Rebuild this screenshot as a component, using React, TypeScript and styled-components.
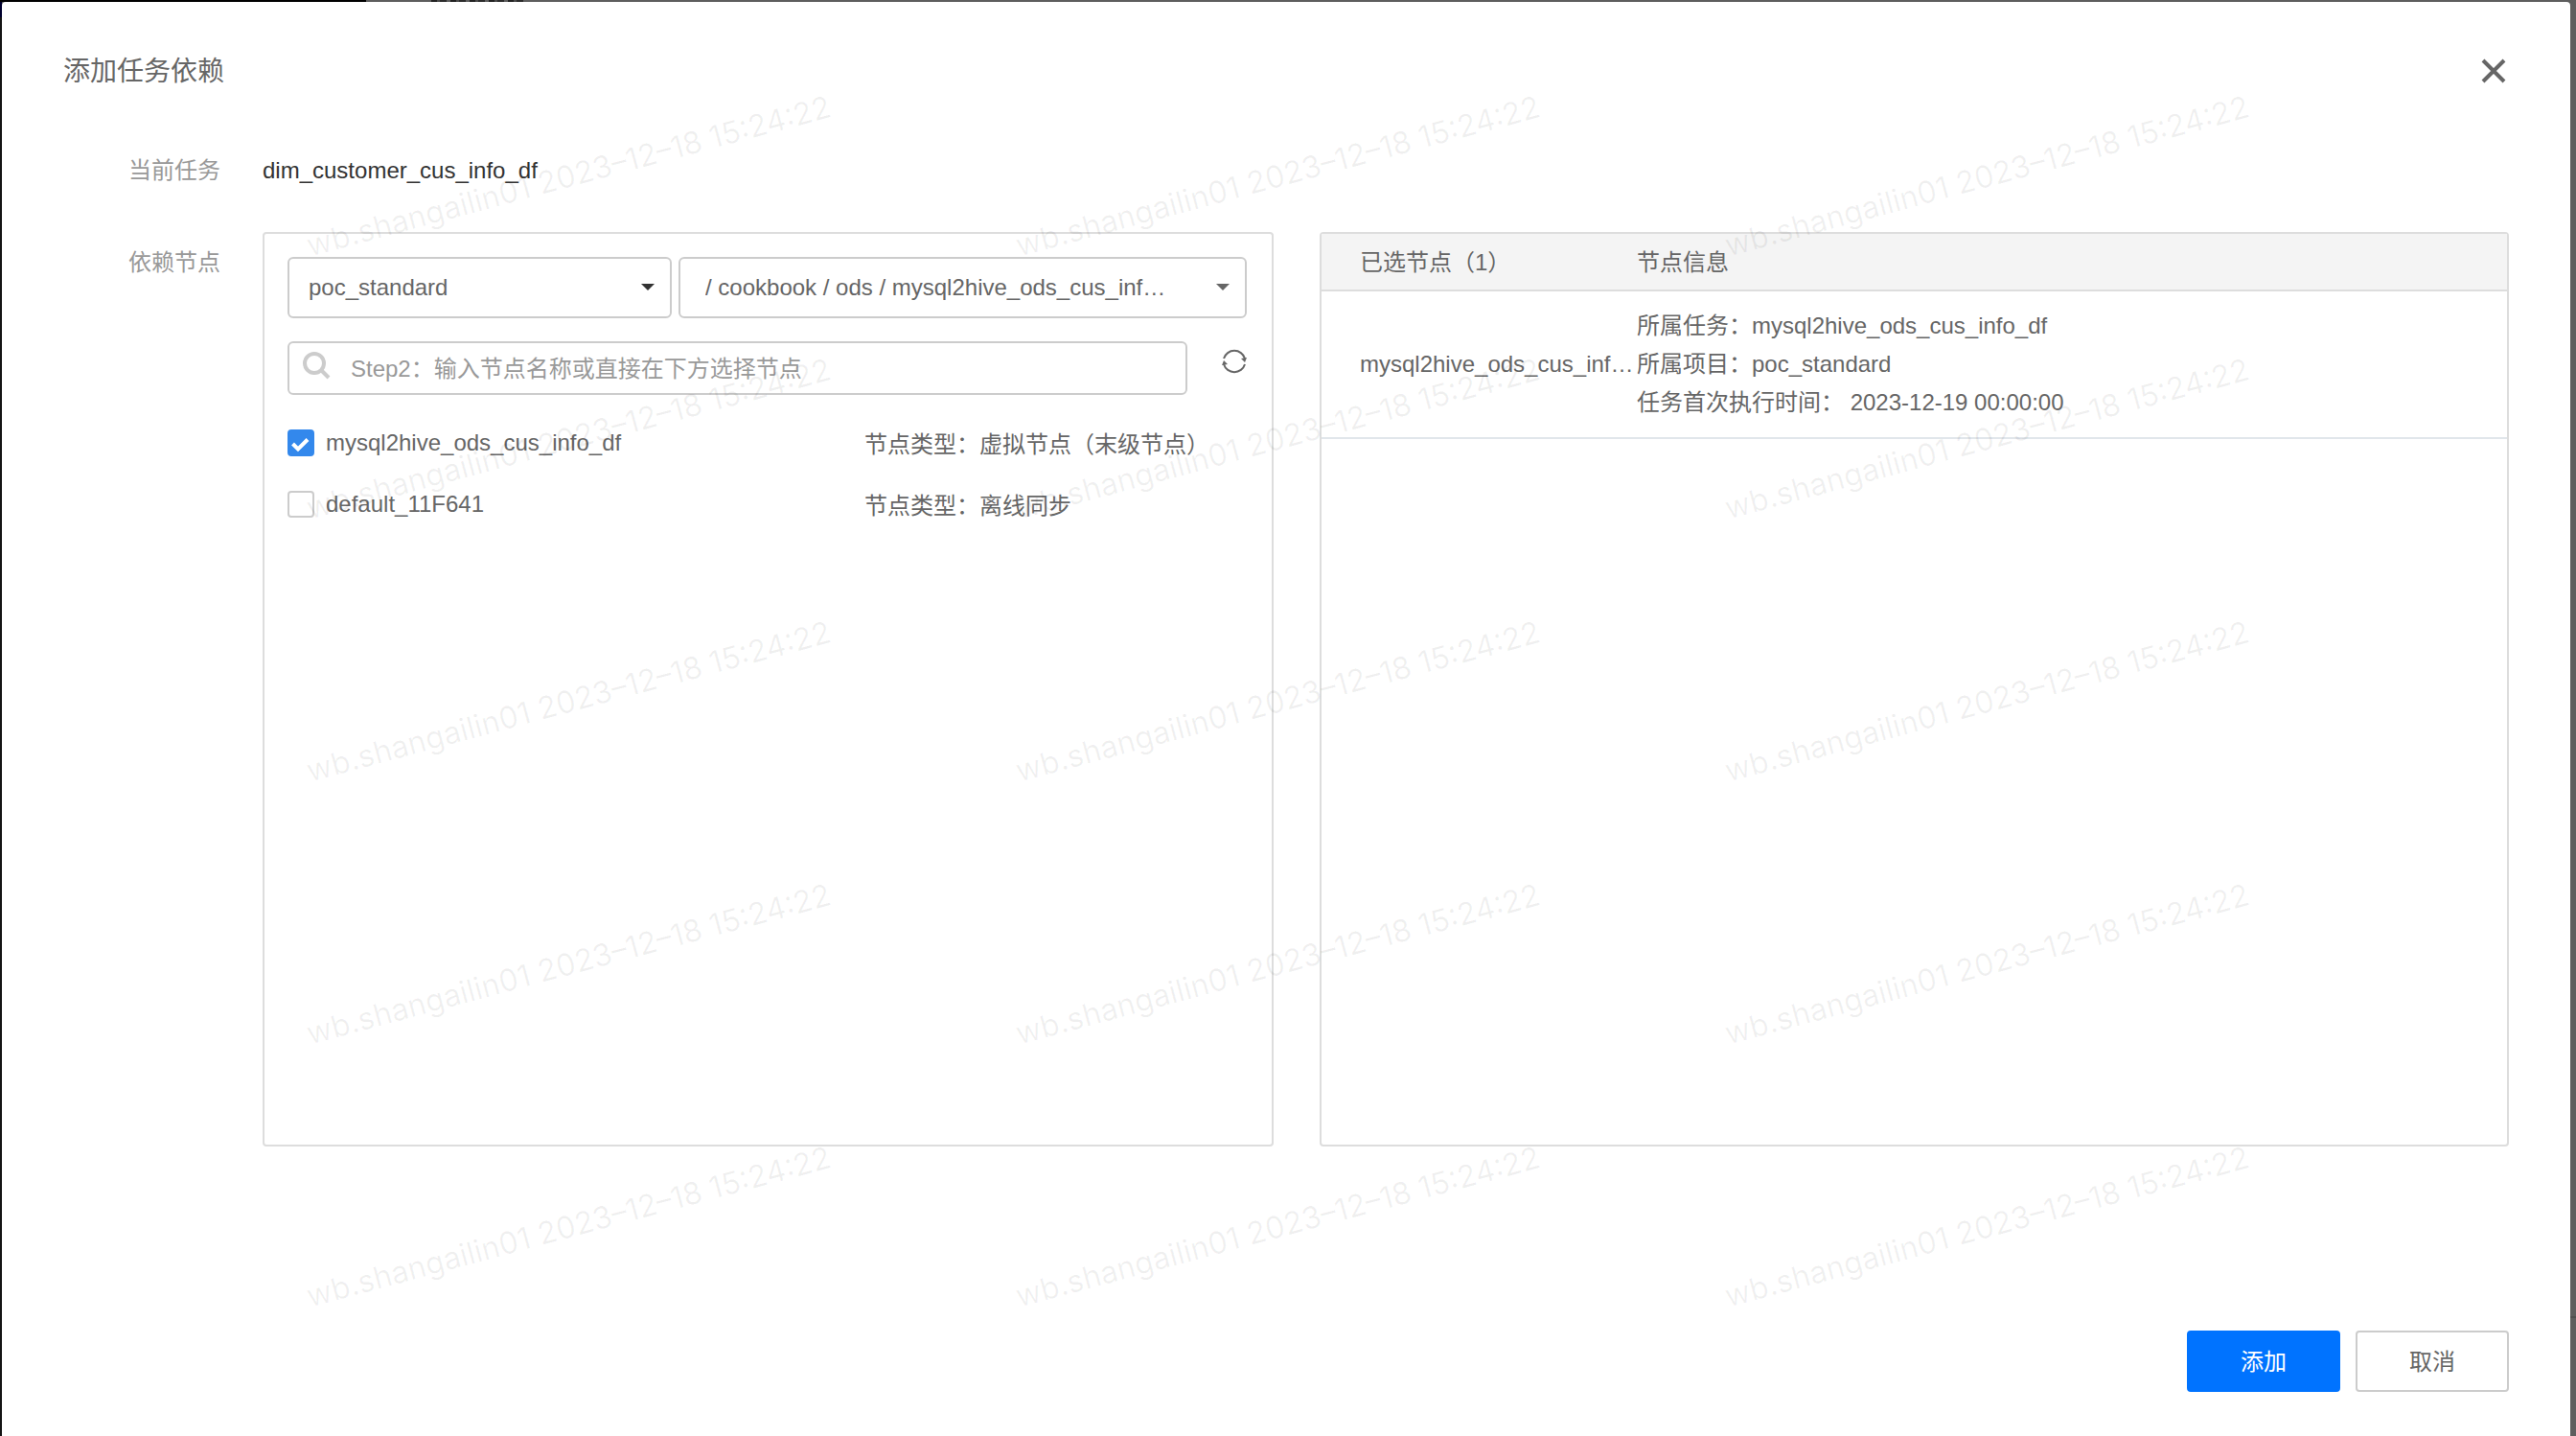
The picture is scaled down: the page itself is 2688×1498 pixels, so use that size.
import React, { useState } from "react";
import styled, { createGlobalStyle } from "styled-components";

const sans = `"Liberation Sans", "Noto Sans CJK SC", sans-serif`;

const GlobalStyle = createGlobalStyle`
  *, *::before, *::after { box-sizing: border-box; }
  body {
    margin: 0;
    background: #5e5e5e;
    color: #666;
    font-family: ${sans};
    font-size: 24px;
    line-height: 40px;
  }
  button, input, select { font: inherit; color: inherit; }
`;

const Backdrop = styled.div`
  min-height: 100vh;
  display: flex;
  padding: 2px 6px 0 2px;
  background:
    linear-gradient(#000, #000) 0 0 / 382px 2px no-repeat,
    repeating-linear-gradient(90deg, #222 0 6px, #4a4a4a 6px 9px, #2c2c2c 9px 16px, #5e5e5e 16px 20px) 450px 0 / 100px 2px no-repeat,
    linear-gradient(#00002e, #00002e) 0 0 / 2px 18px no-repeat,
    linear-gradient(#141414, #141414) 0 0 / 2px 100% no-repeat,
    linear-gradient(#505050, #505050) 100% 1373px / 6px 2px no-repeat,
    #5e5e5e;
`;

const Dialog = styled.section`
  position: relative;
  flex: 1;
  min-width: 0;
  display: flex;
  flex-direction: column;
  padding: 50px 64px 46px;
  background: #fff;
  border-radius: 4px 4px 0 0;
  overflow: hidden;
`;

const Header = styled.header`
  display: flex;
  align-items: center;
  justify-content: space-between;
`;

const Title = styled.h1`
  margin: 0;
  padding-top: 2px;
  font-size: 28px;
  line-height: 42px;
  font-weight: 400;
`;

const CloseButton = styled.button`
  display: flex;
  padding: 0;
  margin-right: 2px;
  border: 0;
  background: none;
  cursor: pointer;
`;

const Form = styled.div`
  flex: 1;
  display: grid;
  grid-template-columns: 164px minmax(0, 1fr);
  grid-template-rows: auto 1fr;
  gap: 44px;
  padding: 62px 0 192px;
`;

const FieldLabel = styled.span<{ $top?: number }>`
  padding-top: ${(p) => p.$top ?? 0}px;
  text-align: right;
  color: #999;
`;

const CurrentTask = styled.span`
  color: #333;
`;

const Panels = styled.div`
  display: grid;
  grid-template-columns: minmax(0, 1055fr) minmax(0, 1241fr);
  gap: 48px;
`;

const Panel = styled.div`
  border: 2px solid #ddd;
  border-radius: 4px;
  min-width: 0;
`;

const SourcePanel = styled(Panel)`
  padding: 24px 26px 24px 24px;
`;

const SelectRow = styled.div`
  display: grid;
  grid-template-columns: minmax(0, 401fr) minmax(0, 593fr);
  gap: 7px;
`;

const SelectBox = styled.div`
  position: relative;
`;

const Select = styled.select<{ $indent?: boolean }>`
  display: block;
  appearance: none;
  width: 100%;
  height: 64px;
  padding: 0 ${(p) => (p.$indent ? 48 : 40)}px 0 ${(p) => (p.$indent ? 26 : 20)}px;
  border: 2px solid #ccc;
  border-radius: 6px;
  background: #fff;
`;

const Caret = styled.span<{ $color: string }>`
  position: absolute;
  right: 18px;
  top: 28px;
  border: 7px solid transparent;
  border-top-color: ${(p) => p.$color};
  border-bottom: 0;
  pointer-events: none;
`;

const SearchRow = styled.div`
  display: flex;
  align-items: flex-start;
  gap: 36px;
  margin-top: 24px;
`;

const SearchBox = styled.label`
  display: flex;
  flex: 1;
  height: 56px;
  padding: 8px 14px;
  border: 2px solid #ccc;
  border-radius: 6px;
  gap: 20px;
`;

const SearchInput = styled.input`
  flex: 1;
  min-width: 0;
  height: 38px;
  padding: 0;
  border: 0;
  outline: 0;
  background: none;
  &::placeholder { color: #999; opacity: 1; }
`;

const RefreshButton = styled.button`
  display: flex;
  padding: 8px 0;
  border: 0;
  background: none;
  cursor: pointer;
`;

const NodeList = styled.ul`
  list-style: none;
  margin: 30px 0 0;
  padding: 0;
  display: grid;
  gap: 22px;
`;

const NodeItem = styled.li`
  display: grid;
  grid-template-columns: minmax(0, 602fr) minmax(0, 399fr);
`;

const NodeLabel = styled.label`
  display: flex;
  align-items: center;
  height: 40px;
  gap: 12px;
`;

const NodeType = styled.span`
  padding-top: 2px;
`;

const tick = encodeURIComponent(
  `<svg xmlns="http://www.w3.org/2000/svg" viewBox="0 0 28 28"><path d="M5.500 15l5.500 5.500L21 10.500" fill="none" stroke="#fff" stroke-width="4"/></svg>`
);

const Checkbox = styled.input`
  appearance: none;
  flex: none;
  width: 28px;
  height: 28px;
  margin: 0;
  border: 2px solid #ccc;
  border-radius: 4px;
  background: #fff;
  &:checked {
    border-color: #3388ec;
    background: #3388ec url("data:image/svg+xml,${tick}") center / 28px 28px no-repeat;
  }
`;

const Table = styled.table`
  width: 100%;
  border-collapse: separate;
  border-spacing: 0;
  table-layout: fixed;
  text-align: left;
`;

const HeadCell = styled.th<{ $first?: boolean }>`
  height: 60px;
  width: ${(p) => (p.$first ? "329px" : "auto")};
  padding: 2px 0 0 ${(p) => (p.$first ? 40 : 0)}px;
  font-weight: 400;
  background: #f4f4f4;
  border-bottom: 2px solid #ddd;
`;

const Cell = styled.td<{ $first?: boolean }>`
  padding: 16px 0 16px ${(p) => (p.$first ? 40 : 0)}px;
  border-bottom: 2px solid #e1e6eb;
  white-space: nowrap;
`;

const Footer = styled.footer`
  display: flex;
  justify-content: flex-end;
  gap: 16px;
`;

const Button = styled.button<{ $primary?: boolean }>`
  width: 160px;
  height: 64px;
  padding: 2px 0 0;
  border: 2px solid ${(p) => (p.$primary ? "#0073ff" : "#ccc")};
  border-radius: 4px;
  background: ${(p) => (p.$primary ? "#0073ff" : "#fff")};
  color: ${(p) => (p.$primary ? "#fff" : "#666")};
  cursor: pointer;
`;

const Watermarks = styled.div`
  position: absolute;
  left: 221px;
  top: 45px;
  display: grid;
  grid-template-columns: repeat(3, 740px);
  grid-auto-rows: 274px;
  place-items: center;
  pointer-events: none;
`;

const Mark = styled.span`
  white-space: nowrap;
  font-family: Inter, ${sans};
  font-size: 32px;
  color: rgba(0, 0, 0, 0.06);
  transform: rotate(-15deg);
`;

interface NodeRow {
  name: string;
  type: string;
}

const nodes: NodeRow[] = [
  { name: "mysql2hive_ods_cus_info_df", type: "虚拟节点（末级节点）" },
  { name: "default_11F641", type: "离线同步" },
];

const shorten = (text: string, max: number) => (text.length > max ? `${text.slice(0, max)}…` : text);

export default function App() {
  const [checked, setChecked] = useState<string[]>([nodes[0].name]);
  const toggle = (name: string) =>
    setChecked((list) => (list.includes(name) ? list.filter((n) => n !== name) : [...list, name]));

  return (
    <>
      <GlobalStyle />
      <Backdrop>
        <Dialog role="dialog" aria-labelledby="dialog-title">
          <Header>
            <Title id="dialog-title">添加任务依赖</Title>
            <CloseButton type="button" aria-label="关闭">
              <svg width="28" height="28" viewBox="0 0 28 28" fill="none" stroke="#666" strokeWidth="4">
                <path d="M3 3l22 22M25 3L3 25" />
              </svg>
            </CloseButton>
          </Header>

          <Form>
            <FieldLabel>当前任务</FieldLabel>
            <CurrentTask>dim_customer_cus_info_df</CurrentTask>
            <FieldLabel $top={12}>依赖节点</FieldLabel>
            <Panels>
              <SourcePanel>
                <SelectRow>
                  <SelectBox>
                    <Select aria-label="项目">
                      <option>poc_standard</option>
                    </Select>
                    <Caret $color="#333" />
                  </SelectBox>
                  <SelectBox>
                    <Select aria-label="任务" $indent>
                      <option>/ cookbook / ods / {shorten(nodes[0].name, 22)}</option>
                    </Select>
                    <Caret $color="#666" />
                  </SelectBox>
                </SelectRow>
                <SearchRow>
                  <SearchBox>
                    <svg width="30" height="32" viewBox="0 0 30 32" fill="none" stroke="#ccc" strokeWidth="4">
                      <circle cx="12" cy="13" r="10" />
                      <path d="M19 20l8 8" />
                    </svg>
                    <SearchInput aria-label="节点名称" placeholder="Step2：输入节点名称或直接在下方选择节点" />
                  </SearchBox>
                  <RefreshButton type="button" aria-label="刷新">
                    <svg width="26" height="26" viewBox="0 0 26 26" fill="none" stroke="#666" strokeWidth="2">
                      <path d="M2 10a11.500 11.500 0 0 1 22 0M24 16a11.500 11.500 0 0 1-22 0" />
                      <path d="M20 10l6-1-2 5zM0 17l2-5 4 4z" fill="#666" stroke="none" />
                    </svg>
                  </RefreshButton>
                </SearchRow>
                <NodeList>
                  {nodes.map((n) => (
                    <NodeItem key={n.name}>
                      <NodeLabel>
                        <Checkbox type="checkbox" checked={checked.includes(n.name)} onChange={() => toggle(n.name)} />
                        {n.name}
                      </NodeLabel>
                      <NodeType>节点类型：{n.type}</NodeType>
                    </NodeItem>
                  ))}
                </NodeList>
              </SourcePanel>

              <Panel>
                <Table>
                  <thead>
                    <tr>
                      <HeadCell $first>已选节点（1）</HeadCell>
                      <HeadCell>节点信息</HeadCell>
                    </tr>
                  </thead>
                  <tbody>
                    <tr>
                      <Cell $first>{shorten(nodes[0].name, 22)}</Cell>
                      <Cell>
                        <div>所属任务：mysql2hive_ods_cus_info_df</div>
                        <div>所属项目：poc_standard</div>
                        <div>任务首次执行时间： 2023-12-19 00:00:00</div>
                      </Cell>
                    </tr>
                  </tbody>
                </Table>
              </Panel>
            </Panels>
          </Form>

          <Footer>
            <Button type="button" $primary>添加</Button>
            <Button type="button">取消</Button>
          </Footer>
          <Watermarks aria-hidden="true">
            {Array.from({ length: 15 }, (_, i) => (
              <Mark key={i}>wb.shangailin01 2023–12–18 15:24:22</Mark>
            ))}
          </Watermarks>
        </Dialog>
      </Backdrop>
    </>
  );
}
